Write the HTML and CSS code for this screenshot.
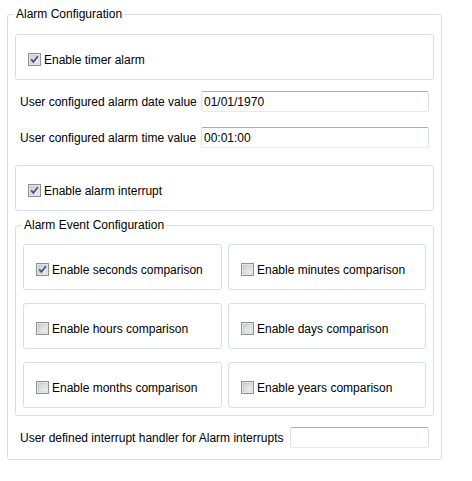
FILE: index.html
```html
<!DOCTYPE html>
<html>
<head>
<meta charset="utf-8">
<link rel="stylesheet" href="styles.css">
</head>
<body>
<svg width="0" height="0" class="defs">
  <defs>
    <linearGradient id="cbfill" x1="0" y1="0" x2="1" y2="1">
      <stop offset="0" stop-color="#c9ccd1"/>
      <stop offset="1" stop-color="#f4f4f4"/>
    </linearGradient>
  </defs>
</svg>
<fieldset class="group main-group">
  <legend class="group-title">Alarm Configuration</legend>

  <div class="option-box">
    <label class="check"><span class="cb"><svg viewBox="0 0 13 13" width="13" height="13"><rect x="0.5" y="0.5" width="12" height="12" fill="#f4f4f4" stroke="#8e8f8f"/><rect x="2" y="2" width="9" height="9" fill="url(#cbfill)" stroke="#b4b7bb" stroke-width="0.5"/><path d="M3.2 6.4 L5.4 8.9 L9.8 3.2" fill="none" stroke="#3d4f86" stroke-width="1.7"/></svg></span>Enable timer alarm</label>
  </div>

  <div class="field-row first-field">
    <span class="field-label">User configured alarm date value</span>
    <input class="text-input wide" type="text" value="01/01/1970">
  </div>
  <div class="field-row second-field">
    <span class="field-label">User configured alarm time value</span>
    <input class="text-input wide" type="text" value="00:01:00">
  </div>

  <div class="option-box interrupt-box">
    <label class="check"><span class="cb"><svg viewBox="0 0 13 13" width="13" height="13"><rect x="0.5" y="0.5" width="12" height="12" fill="#f4f4f4" stroke="#8e8f8f"/><rect x="2" y="2" width="9" height="9" fill="url(#cbfill)" stroke="#b4b7bb" stroke-width="0.5"/><path d="M3.2 6.4 L5.4 8.9 L9.8 3.2" fill="none" stroke="#3d4f86" stroke-width="1.7"/></svg></span>Enable alarm interrupt</label>
  </div>

  <fieldset class="group event-group">
    <legend class="group-title sub-title">Alarm Event Configuration</legend>
    <div class="event-grid">
      <div class="option-box cell">
        <label class="check"><span class="cb"><svg viewBox="0 0 13 13" width="13" height="13"><rect x="0.5" y="0.5" width="12" height="12" fill="#f4f4f4" stroke="#8e8f8f"/><rect x="2" y="2" width="9" height="9" fill="url(#cbfill)" stroke="#b4b7bb" stroke-width="0.5"/><path d="M3.2 6.4 L5.4 8.9 L9.8 3.2" fill="none" stroke="#3d4f86" stroke-width="1.7"/></svg></span>Enable seconds comparison</label>
      </div>
      <div class="option-box cell">
        <label class="check"><span class="cb"><svg viewBox="0 0 13 13" width="13" height="13"><rect x="0.5" y="0.5" width="12" height="12" fill="#f4f4f4" stroke="#8e8f8f"/><rect x="2" y="2" width="9" height="9" fill="url(#cbfill)" stroke="#b4b7bb" stroke-width="0.5"/></svg></span>Enable minutes comparison</label>
      </div>
      <div class="option-box cell">
        <label class="check"><span class="cb"><svg viewBox="0 0 13 13" width="13" height="13"><rect x="0.5" y="0.5" width="12" height="12" fill="#f4f4f4" stroke="#8e8f8f"/><rect x="2" y="2" width="9" height="9" fill="url(#cbfill)" stroke="#b4b7bb" stroke-width="0.5"/></svg></span>Enable hours comparison</label>
      </div>
      <div class="option-box cell">
        <label class="check"><span class="cb"><svg viewBox="0 0 13 13" width="13" height="13"><rect x="0.5" y="0.5" width="12" height="12" fill="#f4f4f4" stroke="#8e8f8f"/><rect x="2" y="2" width="9" height="9" fill="url(#cbfill)" stroke="#b4b7bb" stroke-width="0.5"/></svg></span>Enable days comparison</label>
      </div>
      <div class="option-box cell">
        <label class="check"><span class="cb"><svg viewBox="0 0 13 13" width="13" height="13"><rect x="0.5" y="0.5" width="12" height="12" fill="#f4f4f4" stroke="#8e8f8f"/><rect x="2" y="2" width="9" height="9" fill="url(#cbfill)" stroke="#b4b7bb" stroke-width="0.5"/></svg></span>Enable months comparison</label>
      </div>
      <div class="option-box cell">
        <label class="check"><span class="cb"><svg viewBox="0 0 13 13" width="13" height="13"><rect x="0.5" y="0.5" width="12" height="12" fill="#f4f4f4" stroke="#8e8f8f"/><rect x="2" y="2" width="9" height="9" fill="url(#cbfill)" stroke="#b4b7bb" stroke-width="0.5"/></svg></span>Enable years comparison</label>
      </div>
    </div>
  </fieldset>

  <div class="field-row handler-field">
    <span class="field-label">User defined interrupt handler for Alarm interrupts</span>
    <input class="text-input narrow" type="text" value="">
  </div>
</fieldset>
</body>
</html>
```

FILE: styles.css
```css
html, body {
  margin: 0;
  padding: 0;
  background: #ffffff;
}

body {
  font-family: "Liberation Sans", Arial, sans-serif;
  font-size: 12px;
  color: #000000;
  padding-top: 6px;
}

.defs {
  position: absolute;
  width: 0;
  height: 0;
}

.group {
  margin: 0;
  min-width: 0;
  border: 1px solid #d5dfe5;
  border-radius: 3px;
  box-sizing: border-box;
}

.main-group {
  margin-left: 7px;
  width: 435px;
  padding: 0 7px 11px 7px;
}

.group-title {
  padding: 0 2px;
  margin-left: -1px;
  line-height: 16px;
  height: 16px;
}

.option-box {
  box-sizing: border-box;
  height: 46px;
  border: 1px solid #d5dfe5;
  border-radius: 3px;
  padding: 5px 0 0 12px;
  display: flex;
  align-items: center;
  margin-top: 12px;
}

.check {
  display: flex;
  align-items: center;
  gap: 3px;
  line-height: 16px;
  white-space: nowrap;
}

.cb {
  display: flex;
  width: 13px;
  height: 13px;
}

.field-row {
  display: flex;
  align-items: center;
  justify-content: space-between;
  padding: 0 5px;
  height: 21px;
}

.first-field {
  margin-top: 11px;
}

.second-field {
  margin-top: 15px;
}

.interrupt-box {
  margin-top: 17px;
}

.text-input {
  box-sizing: border-box;
  height: 21px;
  margin: 0;
  padding: 0 2px;
  font-family: "Liberation Sans", Arial, sans-serif;
  font-size: 12px;
  color: #000000;
  background: #ffffff;
  border: 1px solid #dbdfe6;
  border-top-color: #abadb3;
  border-left-color: #e2e3ea;
  border-right-color: #dbdfe6;
  border-bottom-color: #e3e9ef;
  border-radius: 2px;
  outline: none;
}

.wide {
  width: 228px;
}

.narrow {
  width: 139px;
}

.event-group {
  margin-top: 6px;
  padding: 0 7px 7px 7px;
}

.sub-title {
  margin-left: -1px;
}

.event-grid {
  display: grid;
  grid-template-columns: 199px 198px;
  column-gap: 6px;
  row-gap: 13px;
  margin-top: 11px;
}

.event-grid .cell {
  margin-top: 0;
}

.handler-field {
  margin-top: 11px;
}
```
